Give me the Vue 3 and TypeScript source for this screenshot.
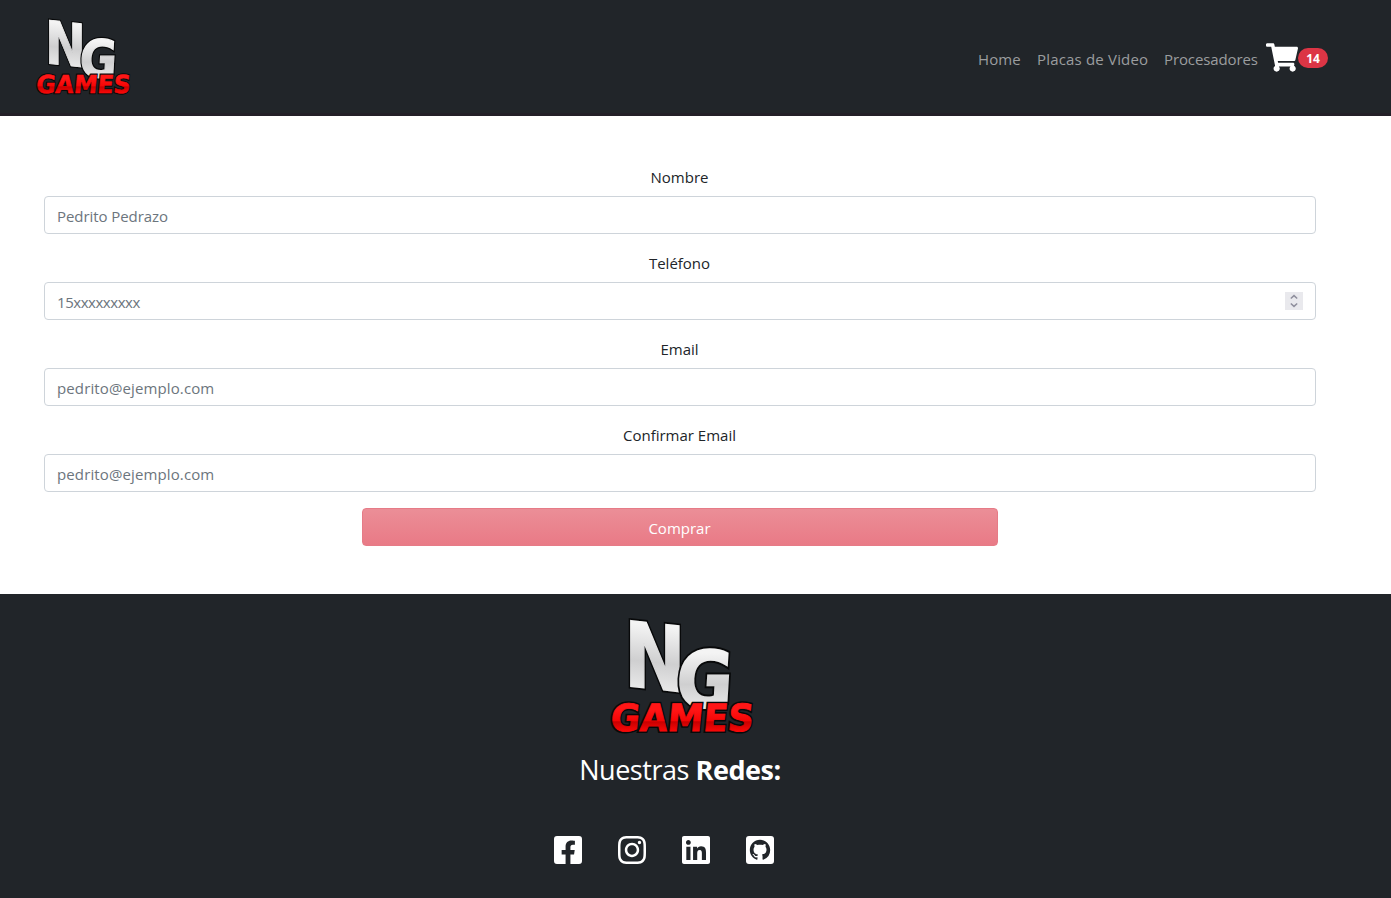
<script setup lang="ts">
import { h } from 'vue'

interface Field { id: string; label: string; placeholder: string; kind: string; stepper?: boolean }
interface Social { name: string; viewBox: string; path: string; tile?: boolean }

const links: { text: string; kind: string }[] = [
  { text: 'Home', kind: 'home' },
  { text: 'Placas de Video', kind: 'placas' },
  { text: 'Procesadores', kind: 'procesadores' },
]

const fields: Field[] = [
  { id: 'nombre', label: 'Nombre', placeholder: 'Pedrito Pedrazo', kind: 'plain' },
  { id: 'telefono', label: 'Teléfono', placeholder: '15xxxxxxxxx', kind: 'phone', stepper: true },
  { id: 'email', label: 'Email', placeholder: 'pedrito@ejemplo.com', kind: 'mail' },
  { id: 'confirmar', label: 'Confirmar Email', placeholder: 'pedrito@ejemplo.com', kind: 'mail' },
]

const socials: Social[] = [
  { name: 'Facebook', viewBox: '0 32 448 448', path: 'M400 32H48A48 48 0 0 0 0 80v352a48 48 0 0 0 48 48h137.25V327.69h-63V256h63v-54.64c0-62.15 37-96.48 93.67-96.48 27.14 0 55.52 4.84 55.52 4.84v61h-31.27c-30.81 0-40.42 19.12-40.42 38.73V256h68.78l-11 71.69h-57.78V480H400a48 48 0 0 0 48-48V80a48 48 0 0 0-48-48z' },
  { name: 'Instagram', viewBox: '0 32 448 448', path: 'M224.1 141c-63.6 0-114.9 51.3-114.9 114.9s51.3 114.9 114.9 114.9S339 319.5 339 255.9 287.7 141 224.1 141zm0 189.6c-41.1 0-74.7-33.5-74.7-74.7s33.5-74.7 74.7-74.7 74.7 33.5 74.7 74.7-33.6 74.7-74.7 74.7zm146.4-194.3c0 14.9-12 26.8-26.8 26.8-14.9 0-26.8-12-26.8-26.8s12-26.8 26.8-26.8 26.8 12 26.8 26.8zm76.1 27.2c-1.7-35.9-9.9-67.7-36.2-93.9-26.2-26.2-58-34.4-93.9-36.2-37-2.1-147.9-2.1-184.9 0-35.8 1.7-67.6 9.9-93.9 36.1s-34.4 58-36.2 93.9c-2.1 37-2.1 147.9 0 184.9 1.7 35.9 9.9 67.7 36.2 93.9s58 34.4 93.9 36.2c37 2.1 147.9 2.1 184.9 0 35.9-1.7 67.7-9.9 93.9-36.2 26.2-26.2 34.4-58 36.2-93.9 2.1-37 2.1-147.8 0-184.8zM398.8 388c-7.8 19.6-22.9 34.7-42.6 42.6-29.5 11.7-99.5 9-132.1 9s-102.7 2.6-132.1-9c-19.6-7.8-34.7-22.9-42.6-42.6-11.7-29.5-9-99.5-9-132.1s-2.6-102.7 9-132.1c7.8-19.6 22.9-34.7 42.6-42.6 29.5-11.7 99.5-9 132.1-9s102.7-2.6 132.1 9c19.6 7.8 34.7 22.9 42.6 42.6 11.7 29.5 9 99.5 9 132.1s2.7 102.7-9 132.1z' },
  { name: 'LinkedIn', viewBox: '0 32 448 448', path: 'M416 32H31.9C14.3 32 0 46.5 0 64.3v383.4C0 465.5 14.3 480 31.9 480H416c17.6 0 32-14.5 32-32.3V64.3c0-17.8-14.4-32.3-32-32.3zM135.4 416H69V202.2h66.5V416zm-33.2-243c-21.3 0-38.5-17.3-38.5-38.5S80.9 96 102.2 96c21.2 0 38.5 17.3 38.5 38.5 0 21.3-17.2 38.5-38.5 38.5zm282.1 243h-66.4V312c0-24.8-.5-56.7-34.5-56.7-34.6 0-39.9 27-39.9 54.9V416h-66.4V202.2h63.7v29.2h.9c8.9-16.8 30.6-34.5 62.9-34.5 67.2 0 79.7 44.3 79.7 101.9V416z' },
  { name: 'GitHub', viewBox: '-3 -3 22 22', tile: true, path: 'M8 0C3.58 0 0 3.58 0 8c0 3.54 2.29 6.53 5.47 7.59.4.07.55-.17.55-.38 0-.19-.01-.82-.01-1.49-2.01.37-2.53-.49-2.69-.94-.09-.23-.48-.94-.82-1.13-.28-.15-.68-.52-.01-.53.63-.01 1.08.58 1.23.82.72 1.21 1.87.87 2.33.66.07-.52.28-.87.51-1.07-1.78-.2-3.64-.89-3.64-3.95 0-.87.31-1.59.82-2.15-.08-.2-.36-1.02.08-2.12 0 0 .67-.21 2.2.82.64-.18 1.32-.27 2-.27.68 0 1.36.09 2 .27 1.53-1.04 2.2-.82 2.2-.82.44 1.1.16 1.92.08 2.12.51.56.82 1.27.82 2.15 0 3.07-1.87 3.75-3.65 3.95.29.25.54.73.54 1.48 0 1.07-.01 1.93-.01 2.2 0 .21.15.46.55.38A8.013 8.013 0 0016 8c0-4.42-3.58-8-8-8z' },
]

// Wordmark shared by the header and the footer.
const Logo = (props: { uid: string }) => {
  const silver = `${props.uid}-silver`
  const red = `${props.uid}-red`
  const letter = (text: string, transform: string, size: number, fill: string, ink: number, outline: number) => {
    const base = { transform, 'font-family': 'DejaVu Sans, sans-serif', 'font-weight': 700, 'font-size': size, 'stroke-linejoin': 'miter', 'paint-order': 'stroke' }
    return [
      h('text', { ...base, fill: '#08090a', stroke: '#08090a', 'stroke-width': outline, 'aria-hidden': 'true' }, text),
      h('text', { ...base, fill: `url(#${fill})`, stroke: `url(#${fill})`, 'stroke-width': ink }, text),
    ]
  }
  return h('svg', { viewBox: '0 0 142 124', overflow: 'visible', role: 'img', 'aria-label': 'NG Games' }, [
    h('defs', [
      h('linearGradient', { id: silver, x1: 0, y1: 0, x2: 0, y2: 1 }, [
        h('stop', { offset: '0.2', 'stop-color': '#f4f4f4' }),
        h('stop', { offset: '0.55', 'stop-color': '#cfcfd0' }),
        h('stop', { offset: '0.85', 'stop-color': '#ececec' }),
      ]),
      h('linearGradient', { id: red, x1: 0, y1: 0, x2: 0, y2: 1 }, [
        h('stop', { offset: '0.3', 'stop-color': '#ff1616' }),
        h('stop', { offset: '0.56', 'stop-color': '#f50505' }),
        h('stop', { offset: '0.58', 'stop-color': '#c80000' }),
        h('stop', { offset: '0.8', 'stop-color': '#fa0808' }),
      ]),
    ]),
    ...letter('N', 'matrix(.82 .09 0 1 15 69.5)', 90, silver, 1.5, 5),
    ...letter('G', 'matrix(.88 0 -.06 1 66 91)', 78, silver, 2, 6),
    ...letter('GAMES', 'matrix(.955 0 -.1 1 .5 115)', 37.5, red, 0.8, 4),
  ])
}
Logo.props = ['uid']
</script>

<template>
  <div class="page">
    <header class="navbar">
      <Logo uid="head" class="brand" />
      <nav class="links">
        <a v-for="l in links" :key="l.text" :class="['link', l.kind]">{{ l.text }}</a>
        <a class="cart">
          <svg viewBox="0 0 576 512" class="cart-icon"><path d="M528.12 301.319l47.273-208C578.806 78.301 567.391 64 551.99 64H159.208l-9.166-44.81C147.758 8.021 137.93 0 126.529 0H24C10.745 0 0 10.745 0 24v16c0 13.255 10.745 24 24 24h69.883l70.248 343.435C147.325 417.1 136 435.222 136 456c0 30.928 25.072 56 56 56s56-25.072 56-56c0-15.674-6.447-29.835-16.824-40h209.647C430.447 426.165 424 440.326 424 456c0 30.928 25.072 56 56 56s56-25.072 56-56c0-22.172-12.888-41.332-31.579-50.405l5.517-24.276c3.413-15.018-8.002-29.319-23.403-29.319H218.117l-6.545-32h293.145c11.206 0 20.92-7.754 23.403-18.681z" /></svg>
          <span class="count">14</span>
        </a>
      </nav>
    </header>

    <form class="form" @submit.prevent>
      <div v-for="f in fields" :key="f.id" class="field">
        <label :for="f.id">{{ f.label }}</label>
        <div class="control">
          <input :id="f.id" :class="f.kind" :placeholder="f.placeholder" />
          <span v-if="f.stepper" class="stepper">
            <svg viewBox="0 0 18 18"><path d="M5.8 6.5 9 3.6l3.2 2.9M5.8 11.5 9 14.4l3.2-2.9" /></svg>
          </span>
        </div>
      </div>
      <button class="buy" disabled>Comprar</button>
    </form>

    <footer class="footer">
      <Logo uid="foot" class="foot-logo" />
      <h2 class="title">Nuestras <b>Redes:</b></h2>
      <div class="socials">
        <svg v-for="s in socials" :key="s.name" :viewBox="s.viewBox" :class="['social', { tile: s.tile }]" :aria-label="s.name"><path :d="s.path" /></svg>
      </div>
    </footer>
  </div>
</template>

<style>
body { margin: 0; background: #fff; }
</style>

<style scoped>
.page { height: 898px; display: flex; flex-direction: column; overflow: hidden; font: 15px/24px "Open Sans", "Noto Sans", sans-serif; color: #212529; }
.page * { box-sizing: border-box; }
.navbar { height: 116px; flex: none; display: flex; align-items: center; justify-content: space-between; padding: 0 63px 0 35px; background: #212529; border-bottom: 3px solid #231f27; }
.brand { width: 94px; height: 82px; margin-top: 3px; overflow: visible; }
.links { display: flex; align-items: center; gap: 16px; margin-top: 5px; }
.link { color: #9b9d9f; white-space: nowrap; }
.home { width: 43px; letter-spacing: .1px; }
.placas { width: 111px; letter-spacing: .18px; }
.procesadores { width: 94px; letter-spacing: -.12px; }
.cart { display: flex; align-items: center; margin: -3px 0 0 -8px; }
.cart-icon { width: 32px; height: 29px; fill: #fff; }
.count { width: 30px; height: 20px; margin-top: 1px; border-radius: 10px; background: #dc3545; color: #fff; font-size: 12px; font-weight: 700; line-height: 21px; text-align: center; }
.form { width: 1272px; height: 478px; flex: none; margin-left: 44px; padding-top: 48px; display: flex; flex-direction: column; align-items: center; }
.field { width: 100%; height: 86px; text-align: center; }
label { display: block; height: 32px; line-height: 27px; padding-right: 1px; }
.control { height: 38px; display: flex; align-items: center; border: 1px solid #ced4da; border-radius: 4px; padding: 0 12px; }
input { flex: 1; min-width: 0; height: 36px; padding: 1px 0 0; border: 0; outline: 0; background: transparent; font: inherit; color: #212529; }
input::placeholder { color: #6c757d; opacity: 1; }
.plain { letter-spacing: -.07px; }
.phone { letter-spacing: -.45px; }
.mail { letter-spacing: .12px; }
.stepper { width: 18px; height: 18px; background: #e9e9ed; }
.stepper svg { display: block; width: 18px; height: 18px; fill: none; stroke: #8f8f9d; stroke-width: 1.5; }
.buy { width: 636px; height: 38px; padding: 1px 1px 0 0; border: 1px solid #e67b87; border-radius: 4px; background: linear-gradient(#eb8e97, #e97a86); color: #fff; font: inherit; }
.footer { height: 304px; flex: none; padding: 22px 31px 0 0; display: flex; flex-direction: column; align-items: center; background: #212529; color: #fff; }
.foot-logo { width: 142px; height: 124px; flex: none; overflow: visible; }
.title { margin: 13px 0 0; font-size: 27px; font-weight: 400; line-height: 34px; white-space: nowrap; letter-spacing: -.45px; }
.socials { display: flex; gap: 36px; margin: 49px 32px 0 0; }
.social { width: 28px; height: 28px; fill: #fff; }
.tile { background: #fff; border-radius: 3px; fill: #212529; }
</style>
